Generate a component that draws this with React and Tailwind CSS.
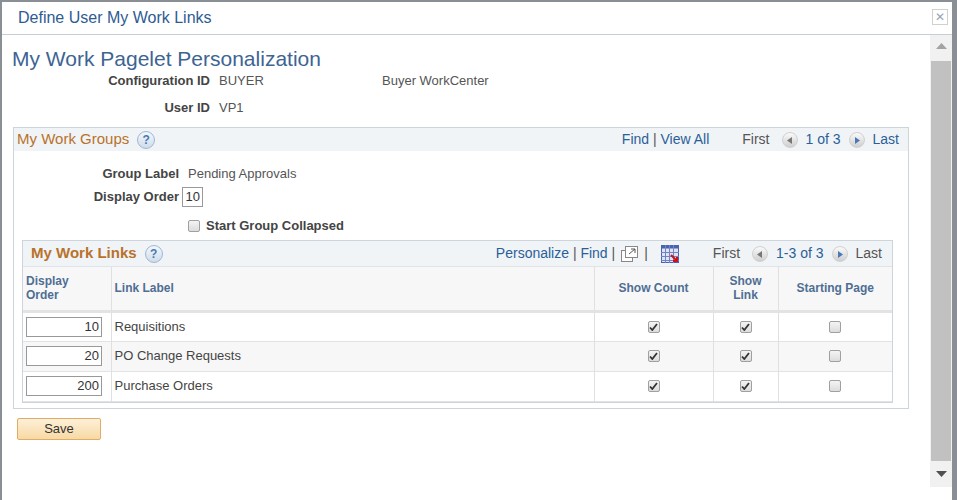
import React from "react";

const Help = () => (
  <span className="inline-flex items-center justify-center w-[18px] h-[18px] rounded-full border border-[#9fb7d3] bg-gradient-to-b from-[#f4f8fc] to-[#cfdcea] text-[#4a79b5] text-[12px] font-bold leading-none">?</span>
);
const Arrow = ({ dir }) => (
  <span className="inline-flex items-center justify-center w-[16px] h-[16px] rounded-full bg-gradient-to-b from-[#fafafa] to-[#cfcfcf] border border-[#d0d0d0]">
    <svg width="6" height="7" viewBox="0 0 6 7">
      {dir === "l" ? <path d="M5 0L0 3.5 5 7z" fill="#777" /> : <path d="M1 0L6 3.5 1 7z" fill="#4a79b5" />}
    </svg>
  </span>
);
const CB = ({ checked }) => (
  <span className="inline-flex items-center justify-center w-[12px] h-[12px] rounded-[2px] border border-[#a0a0a0] bg-gradient-to-b from-[#f4f4f4] to-[#dcdcdc]">
    {checked && (
      <svg width="9" height="8" viewBox="0 0 9 8"><path d="M1 4.5L3.3 7 8 1" stroke="#333" strokeWidth="1.8" fill="none" /></svg>
    )}
  </span>
);

export default function App() {
  const rows = [["10", "Requisitions"], ["20", "PO Change Requests"], ["200", "Purchase Orders"]];
  return (
    <div className="w-[957px] h-[500px] bg-[#8a8f96] pl-[2px] pt-[2px] overflow-hidden" style={{ fontFamily: '"Liberation Sans", Arial, sans-serif' }}>
      <div className="w-[950px] h-[498px] bg-white flex flex-col">
        <div className="h-[33px] shrink-0 flex items-center justify-between border-b border-[#c6cfd8] pl-[16px] pr-[4px]">
          <span className="text-[16px] text-[#2e5c92]">Define User My Work Links</span>
          <span className="w-[16px] h-[16px] border border-[#d0d0d0] flex items-center justify-center text-[#9aa5b1] text-[12px] mt-[-2px]">✕</span>
        </div>
        <div className="flex flex-1 min-h-0">
          <div className="flex-1 text-[13px] text-[#333]">
            <div className="pl-[10px] pt-[12px] text-[21px] text-[#3d6493] leading-[24px]">My Work Pagelet Personalization</div>
            <div className="flex h-[22px] items-center mt-[-1px]">
              <span className="w-[208px] text-right font-bold text-[#444]">Configuration ID</span>
              <span className="ml-[9px] w-[163px] text-[#555]">BUYER</span>
              <span className="text-[#555]">Buyer WorkCenter</span>
            </div>
            <div className="flex h-[22px] items-center mt-[5px]">
              <span className="w-[208px] text-right font-bold text-[#444]">User ID</span>
              <span className="ml-[9px] text-[#555]">VP1</span>
            </div>
            <div className="ml-[11px] mt-[8px] w-[896px] h-[282px] border border-[#cdd5dc] flex flex-col">
              <div className="h-[23px] bg-[#f1f4f6] flex items-center px-[3px]">
                <span className="text-[15px] text-[#b8722c]">My Work Groups</span>
                <span className="ml-[8px]"><Help /></span>
                <span className="ml-auto text-[#2a6099] text-[14px]">Find <span className="text-[#555]">|</span> View All</span>
                <span className="ml-[33px] text-[14px] text-[#555]">First</span>
                <span className="ml-[12px]"><Arrow dir="l" /></span>
                <span className="ml-[8px] text-[14px] text-[#2a6099]">1 of 3</span>
                <span className="ml-[8px]"><Arrow dir="r" /></span>
                <span className="ml-[8px] mr-[6px] text-[14px] text-[#2a6099]">Last</span>
              </div>
              <div className="flex items-center h-[22px] mt-[12px]">
                <span className="w-[165px] text-right font-bold text-[#444]">Group Label</span>
                <span className="ml-[9px] text-[#555]">Pending Approvals</span>
              </div>
              <div className="flex items-center h-[22px] mt-[1px]">
                <span className="w-[165px] text-right font-bold text-[#444]">Display Order</span>
                <span className="ml-[3px] w-[21px] h-[20px] border border-[#999] text-right pr-[2px] leading-[18px] text-[#333]">10</span>
              </div>
              <div className="flex items-center h-[22px] mt-[7px] ml-[174px]">
                <CB />
                <span className="ml-[6px] font-bold text-[#444]">Start Group Collapsed</span>
              </div>
              <div className="ml-[8px] mt-[3px] w-[871px] border border-[#cdd5dc] flex flex-col">
                <div className="h-[26px] bg-[#f1f4f6] flex items-center px-[8px] border-b border-[#e0e4e8]">
                  <span className="text-[15px] font-bold text-[#b8722c]">My Work Links</span>
                  <span className="ml-[8px]"><Help /></span>
                  <span className="ml-auto text-[#2a6099] text-[14px]">Personalize <span className="text-[#555]">|</span> Find <span className="text-[#555]">|</span></span>
                  <svg className="ml-[6px]" width="17" height="16" viewBox="0 0 17 16">
                    <rect x="0.5" y="4.5" width="11" height="11" fill="#fff" stroke="#888" />
                    <rect x="4.5" y="0.5" width="12" height="11" fill="#fff" stroke="#888" />
                    <path d="M8 8l6-5M10 3h4v4" stroke="#555" fill="none" />
                  </svg>
                  <span className="ml-[6px] text-[#555] text-[14px]">|</span>
                  <svg className="ml-[13px]" width="18" height="18" viewBox="0 0 18 18">
                    <rect x="0.5" y="0.5" width="17" height="17" fill="#dde3f2" stroke="#4a62b0" />
                    <rect x="0.5" y="0.5" width="17" height="3" fill="#4a62b0" />
                    <path d="M0 7.5h18M0 11.5h18M0 15.5h18M4.5 0v18M8.5 0v18M12.5 0v18" stroke="#7083c4" />
                    <path d="M10 10l6 6M16 12v4h-4" stroke="#d0101a" strokeWidth="2" fill="none" />
                  </svg>
                  <span className="ml-[34px] text-[14px] text-[#555]">First</span>
                  <span className="ml-[12px]"><Arrow dir="l" /></span>
                  <span className="ml-[8px] text-[14px] text-[#2a6099]">1-3 of 3</span>
                  <span className="ml-[8px]"><Arrow dir="r" /></span>
                  <span className="ml-[8px] mr-[2px] text-[14px] text-[#555]">Last</span>
                </div>
                <table className="border-collapse text-[13px] w-[869px] table-fixed">
                  <colgroup>
                    <col className="w-[88px]" /><col className="w-[483px]" /><col className="w-[119px]" /><col className="w-[65px]" /><col className="w-[114px]" />
                  </colgroup>
                  <thead>
                    <tr className="h-[44px] bg-[#f7f7f7] text-[12px] font-bold text-[#4f6e94] border-b-[3px] border-[#e3e3e3]">
                      <th className="text-left font-bold px-[3px] leading-[14px] border-r border-[#e0e0e0]">Display<br />Order</th>
                      <th className="text-left font-bold px-[3px] border-r border-[#e0e0e0]">Link Label</th>
                      <th className="font-bold border-r border-[#e0e0e0]">Show Count</th>
                      <th className="font-bold leading-[14px] border-r border-[#e0e0e0]">Show<br />Link</th>
                      <th className="font-bold">Starting Page</th>
                    </tr>
                  </thead>
                  <tbody>
                    {rows.map(([n, l], i) => (
                      <tr key={i} className={`h-[30px] border-b border-[#e3e3e3] ${i === 1 ? "bg-[#f7f7f7]" : "bg-white"}`}>
                        <td className="px-[2px] border-r border-[#e0e0e0]">
                          <div className="w-[76px] h-[20px] border border-[#999] bg-white text-right pr-[2px] leading-[18px] text-[#333] ml-[1px]">{n}</div>
                        </td>
                        <td className="px-[3px] text-[#444] border-r border-[#e0e0e0]">{l}</td>
                        <td className="border-r border-[#e0e0e0]"><div className="flex justify-center items-center"><CB checked /></div></td>
                        <td className="border-r border-[#e0e0e0]"><div className="flex justify-center items-center"><CB checked /></div></td>
                        <td><div className="flex justify-center items-center"><CB /></div></td>
                      </tr>
                    ))}
                  </tbody>
                </table>
              </div>
            </div>
            <button className="ml-[15px] mt-[9px] w-[84px] h-[22px] rounded-[2px] border border-[#e0ac68] bg-gradient-to-b from-[#fdf0d8] to-[#f8d9a4] text-[13px] text-[#333]">Save</button>
          </div>
          <div className="w-[22px] bg-[#f1f1f1] flex flex-col items-center mb-[13px]">
            <svg className="mt-[8px]" width="11" height="6" viewBox="0 0 11 6"><path d="M0 6L5.5 0 11 6z" fill="#a3a3a3" /></svg>
            <div className="w-[20px] flex-1 bg-[#c1c1c1] mt-[12px] mb-[10px]" />
            <svg className="mb-[10px]" width="11" height="6" viewBox="0 0 11 6"><path d="M0 0L5.5 6 11 0z" fill="#505050" /></svg>
          </div>
        </div>
      </div>
    </div>
  );
}
